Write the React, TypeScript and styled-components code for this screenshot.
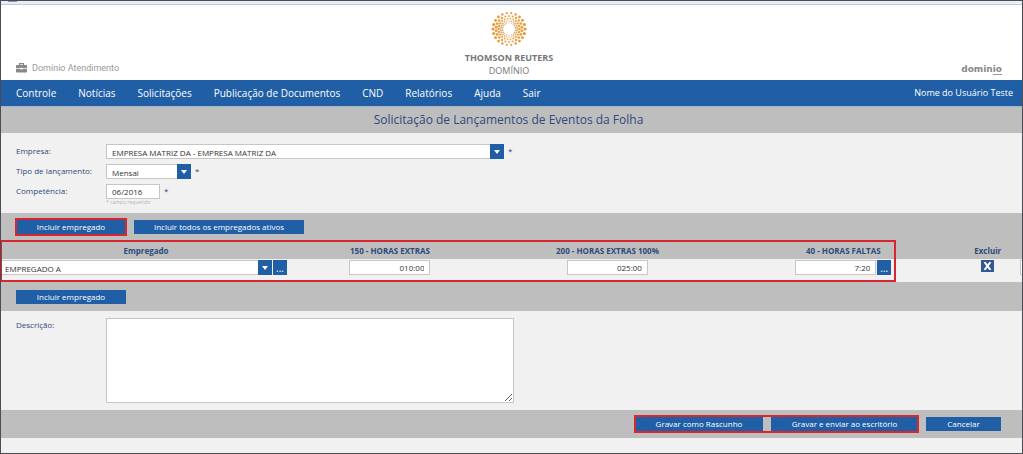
import React from "react";
import styled, { createGlobalStyle } from "styled-components";

const blue = "#205ea6";
const navy = "#2f4a7c";
const grey = "#bebebe";
const pale = "#f1f1f1";
const red = "#d8262f";

const GlobalStyle = createGlobalStyle`
  *, *::before, *::after { box-sizing: border-box; }
  body { margin: 0; background: ${pale}; }
  body, button, input, select, textarea {
    font-family: "Open Sans", "Noto Sans", sans-serif;
    font-size: 8px;
    line-height: 14px;
  }
`;

const Frame = styled.div`
  min-height: 100vh;
  border: 1px solid #4b4c54;
  background: ${pale};
  overflow: hidden;
`;

const WindowStrip = styled.div`
  height: 4px;
  background: #e9edf6;
  border-bottom: 1px solid #c3cbdb;
`;

const WindowTab = styled.div`
  width: 9px;
  height: 1px;
  margin-left: 7px;
  background: #8b96ab;
`;

const Header = styled.header`
  display: grid;
  grid-template-columns: 1fr auto 1fr;
  height: 75px;
  padding: 0 20px 4px 15px;
  background: #fff;
`;

const Product = styled.div`
  display: flex;
  align-items: center;
  align-self: end;
  gap: 5px;
  height: 20px;
  color: #999;
  font-family: Roboto, sans-serif;
  font-size: 9px;
`;

const Brand = styled.div`
  display: flex;
  flex-direction: column;
  align-items: center;
  padding-top: 6px;
  color: #777;
`;

const BrandName = styled.strong`
  margin-top: 5px;
  font-size: 9px;
  font-weight: 700;
  line-height: 12px;
`;

const BrandUnit = styled.span`
  font-size: 9px;
  line-height: 14px;
`;

const Wordmark = styled.div`
  align-self: end;
  justify-self: end;
  height: 13px;
  color: #888;
  font-family: "DejaVu Sans", sans-serif;
  font-size: 9px;
  font-weight: 700;
  line-height: 9px;
`;

const WordmarkEnd = styled.span`
  display: inline-block;
  border-bottom: 1px solid #999;
`;

const Nav = styled.nav`
  display: flex;
  align-items: center;
  justify-content: space-between;
  height: 26px;
  padding: 0 9px 0 15px;
  background: ${blue};
  color: #fff;
`;

const Menu = styled.div`
  display: flex;
  gap: 22px;
`;

const MenuLink = styled.a`
  color: #fff;
  font-size: 10px;
  text-decoration: none;
`;

const UserName = styled.span`
  font-size: 9px;
`;

const PageTitle = styled.h1`
  height: 27px;
  margin: 0;
  padding-right: 6px;
  border-top: 1px solid #9fb4d0;
  background: ${grey};
  color: ${navy};
  font-size: 12px;
  font-weight: 400;
  line-height: 26px;
  text-align: center;
`;

const Form = styled.section`
  display: flex;
  flex-direction: column;
  gap: 5px;
  height: 80px;
  padding: 11px 15px 0;
`;

const Field = styled.div`
  display: flex;
  align-items: flex-start;
  min-height: 15px;
`;

const Label = styled.label`
  flex: 0 0 90px;
  color: ${navy};
`;

const Required = styled.span`
  margin-left: 4px;
  color: ${navy};
`;

const Hint = styled.p`
  margin: -6px 0 0 90px;
  color: #b4b4b4;
  font-size: 5px;
  line-height: 8px;
`;

const TextInput = styled.input<{ $width: number; $end?: boolean }>`
  width: ${(p) => p.$width}px;
  height: 15px;
  padding: 0 5px;
  border: 1px solid #c6c6c6;
  border-radius: 0;
  background: #fff;
  color: #333;
  line-height: 13px;
  text-align: ${(p) => (p.$end ? "right" : "left")};
`;

const SelectBox = styled.span<{ $width: string }>`
  display: grid;
  grid-template-columns: 1fr 14px;
  width: ${(p) => p.$width};
  height: 15px;
`;

const NativeSelect = styled.select<{ $inset: number }>`
  grid-area: 1 / 1 / 2 / 3;
  min-width: 0;
  height: 15px;
  padding: 2px 14px 0 ${(p) => p.$inset}px;
  appearance: none;
  border: 1px solid #c6c6c6;
  border-radius: 0;
  background: #fff;
  color: #333;
  line-height: 12px;
`;

const Arrow = styled.span`
  grid-area: 1 / 2;
  z-index: 1;
  display: grid;
  place-items: center;
  background: ${blue};
  pointer-events: none;
`;

const Bar = styled.div<{ $height: number; $end?: boolean }>`
  display: flex;
  align-items: center;
  justify-content: ${(p) => (p.$end ? "flex-end" : "flex-start")};
  gap: 8px;
  height: ${(p) => p.$height}px;
  padding: 0 21px 0 15px;
  background: ${grey};
`;

const ActionButton = styled.button<{ $width: number }>`
  width: ${(p) => p.$width}px;
  height: 14px;
  padding: 0;
  border: 0;
  background: ${blue};
  color: #fff;
  line-height: 14px;
  white-space: nowrap;
`;

const Highlight = styled.div`
  position: relative;
  display: flex;
  gap: 8px;

  &::after {
    content: "";
    position: absolute;
    inset: -2px -1px;
    border: 2px solid ${red};
    pointer-events: none;
  }
`;

const EntryArea = styled.div`
  position: relative;
`;

const EntryHighlight = styled.div`
  position: absolute;
  top: 0;
  left: -1px;
  width: 87.8%;
  height: 100%;
  border: 2px solid ${red};
  pointer-events: none;
`;

const Entries = styled.table`
  width: 100%;
  border-collapse: collapse;
  table-layout: fixed;
  color: ${navy};
  text-align: center;
`;

const HeadCell = styled.th`
  height: 19px;
  padding: 2px 0 0;
  background: ${grey};
  font-weight: 700;
  line-height: 14px;
`;

const Cell = styled.td`
  height: 23px;
  padding: 1px 0 0;
  vertical-align: top;
`;

const CellRow = styled.div<{ $start?: boolean }>`
  display: flex;
  justify-content: ${(p) => (p.$start ? "flex-start" : "center")};
  gap: 1px;
`;

const CutOffField = styled.div`
  height: 15px;
  margin-left: 5px;
  border: 1px solid #c6c6c6;
  border-right: 0;
  background: #fff;
`;

const MoreButton = styled.button`
  width: 14px;
  height: 15px;
  padding: 0;
  border: 0;
  background: ${blue};
  color: #fff;
  font-size: 10px;
  line-height: 12px;
`;

const DeleteButton = styled.button`
  display: grid;
  place-items: center;
  width: 13px;
  height: 12px;
  padding: 0;
  border: 0;
  background: #355796;
`;

const DescriptionArea = styled.section`
  display: flex;
  align-items: flex-start;
  padding: 7px 15px;
`;

const Description = styled.textarea`
  width: 408px;
  height: 85px;
  border: 1px solid #c6c6c6;
  background: #fff;
`;

const rings = [
  { r: 16, dot: 1.4, color: "#e8963a" },
  { r: 13, dot: 1.35, color: "#eba03f" },
  { r: 10.4, dot: 1.15, color: "#e6a550" },
  { r: 8.2, dot: 0.9, color: "#dba65c" },
  { r: 6.4, dot: 0.65, color: "#cfa468" },
];

function BrandMark() {
  const count = 22;
  return (
    <svg width="36" height="36" viewBox="-18 -18 36 36" aria-hidden="true">
      {rings.map((ring, level) =>
        Array.from({ length: count }, (_, i) => {
          const angle = ((i + level / 2) / count) * Math.PI * 2;
          const size = ring.dot * (0.7 + 0.4 * Math.abs(Math.cos(angle)));
          return (
            <circle
              key={`${level}-${i}`}
              cx={ring.r * Math.cos(angle)}
              cy={ring.r * Math.sin(angle)}
              r={size}
              fill={ring.color}
            />
          );
        }),
      )}
    </svg>
  );
}

function Briefcase() {
  return (
    <svg width="11" height="10" viewBox="0 0 11 10" aria-hidden="true">
      <path d="M3.5 2V.7h4V2" fill="none" stroke="#888" strokeWidth="1.2" />
      <path d="M.8 2h9.4q.8 0 .8.8V5.300H6.500v-.6h-2v.6H0V2.800Q0 2 .8 2z" fill="#888" />
      <path d="M0 5.900h4.500v.6h2v-.6H11v2.800q0 .8-.8.8H.8Q0 9.500 0 8.700z" fill="#888" />
    </svg>
  );
}

interface SelectProps {
  id?: string;
  label?: string;
  value: string;
  width: string;
  inset?: number;
}

function Select({ id, label, value, width, inset = 5 }: SelectProps) {
  return (
    <SelectBox $width={width}>
      <NativeSelect id={id} aria-label={label} $inset={inset}>
        <option>{value}</option>
      </NativeSelect>
      <Arrow>
        <svg width="6" height="4" viewBox="0 0 6 4" aria-hidden="true">
          <path d="M0 0h6L3 4z" fill="#fff" />
        </svg>
      </Arrow>
    </SelectBox>
  );
}

const menu = [
  "Controle",
  "Notícias",
  "Solicitações",
  "Publicação de Documentos",
  "CND",
  "Relatórios",
  "Ajuda",
  "Sair",
];

export default function App() {
  return (
    <Frame>
      <GlobalStyle />
      <WindowStrip>
        <WindowTab />
      </WindowStrip>
      <Header>
        <Product>
          <Briefcase />
          Domínio Atendimento
        </Product>
        <Brand>
          <BrandMark />
          <BrandName>THOMSON REUTERS</BrandName>
          <BrandUnit>DOMÍNIO</BrandUnit>
        </Brand>
        <Wordmark>
          domin<WordmarkEnd>io</WordmarkEnd>
        </Wordmark>
      </Header>
      <Nav>
        <Menu>
          {menu.map((item) => (
            <MenuLink key={item} href="#">
              {item}
            </MenuLink>
          ))}
        </Menu>
        <UserName>Nome do Usuário Teste</UserName>
      </Nav>
      <PageTitle>Solicitação de Lançamentos de Eventos da Folha</PageTitle>
      <Form>
        <Field>
          <Label htmlFor="empresa">Empresa:</Label>
          <Select
            id="empresa"
            value="EMPRESA MATRIZ DA - EMPRESA MATRIZ DA"
            width="398px"
          />
          <Required>*</Required>
        </Field>
        <Field>
          <Label htmlFor="tipo">Tipo de lançamento:</Label>
          <Select id="tipo" value="Mensal" width="85px" />
          <Required>*</Required>
        </Field>
        <Field>
          <Label htmlFor="competencia">Competência:</Label>
          <TextInput id="competencia" $width={54} defaultValue="06/2016" />
          <Required>*</Required>
        </Field>
        <Hint>* campo requerido</Hint>
      </Form>
      <Bar $height={27}>
        <Highlight>
          <ActionButton $width={110}>Incluir empregado</ActionButton>
        </Highlight>
        <ActionButton $width={170}>Incluir todos os empregados ativos</ActionButton>
      </Bar>
      <EntryArea>
        <Entries>
          <colgroup>
            <col style={{ width: "28.4%" }} />
            <col style={{ width: "19.4%" }} />
            <col style={{ width: "23.2%" }} />
            <col style={{ width: "23%" }} />
            <col style={{ width: "5.3%" }} />
            <col />
          </colgroup>
          <thead>
            <tr>
              <HeadCell>Empregado</HeadCell>
              <HeadCell>150 - HORAS EXTRAS</HeadCell>
              <HeadCell>200 - HORAS EXTRAS 100%</HeadCell>
              <HeadCell>40 - HORAS FALTAS</HeadCell>
              <HeadCell>Excluir</HeadCell>
              <HeadCell />
            </tr>
          </thead>
          <tbody>
            <tr>
              <Cell>
                <CellRow $start>
                  <Select label="Empregado" value="EMPREGADO A" width="271px" inset={3} />
                  <MoreButton aria-label="Buscar empregado">...</MoreButton>
                </CellRow>
              </Cell>
              <Cell>
                <CellRow>
                  <TextInput aria-label="Horas extras" $width={81} $end defaultValue="010:00" />
                </CellRow>
              </Cell>
              <Cell>
                <CellRow>
                  <TextInput aria-label="Horas extras 100%" $width={81} $end defaultValue="025:00" />
                </CellRow>
              </Cell>
              <Cell>
                <CellRow>
                  <TextInput aria-label="Horas faltas" $width={81} $end defaultValue="7:20" />
                  <MoreButton aria-label="Detalhar faltas">...</MoreButton>
                </CellRow>
              </Cell>
              <Cell>
                <CellRow>
                  <DeleteButton aria-label="Excluir">
                    <svg width="9" height="8" viewBox="0 0 9 8" aria-hidden="true">
                      <path d="M1.500 0 7.500 8M7.500 0 1.500 8" stroke="#fff" strokeWidth="2" />
                    </svg>
                  </DeleteButton>
                </CellRow>
              </Cell>
              <Cell>
                <CutOffField />
              </Cell>
            </tr>
          </tbody>
        </Entries>
        <EntryHighlight />
      </EntryArea>
      <Bar $height={29}>
        <ActionButton $width={110}>Incluir empregado</ActionButton>
      </Bar>
      <DescriptionArea>
        <Label htmlFor="descricao">Descrição:</Label>
        <Description id="descricao" />
      </DescriptionArea>
      <Bar $height={28} $end>
        <Highlight>
          <ActionButton $width={128}>Gravar como Rascunho</ActionButton>
          <ActionButton $width={147}>Gravar e enviar ao escritório</ActionButton>
        </Highlight>
        <ActionButton $width={75}>Cancelar</ActionButton>
      </Bar>
    </Frame>
  );
}
